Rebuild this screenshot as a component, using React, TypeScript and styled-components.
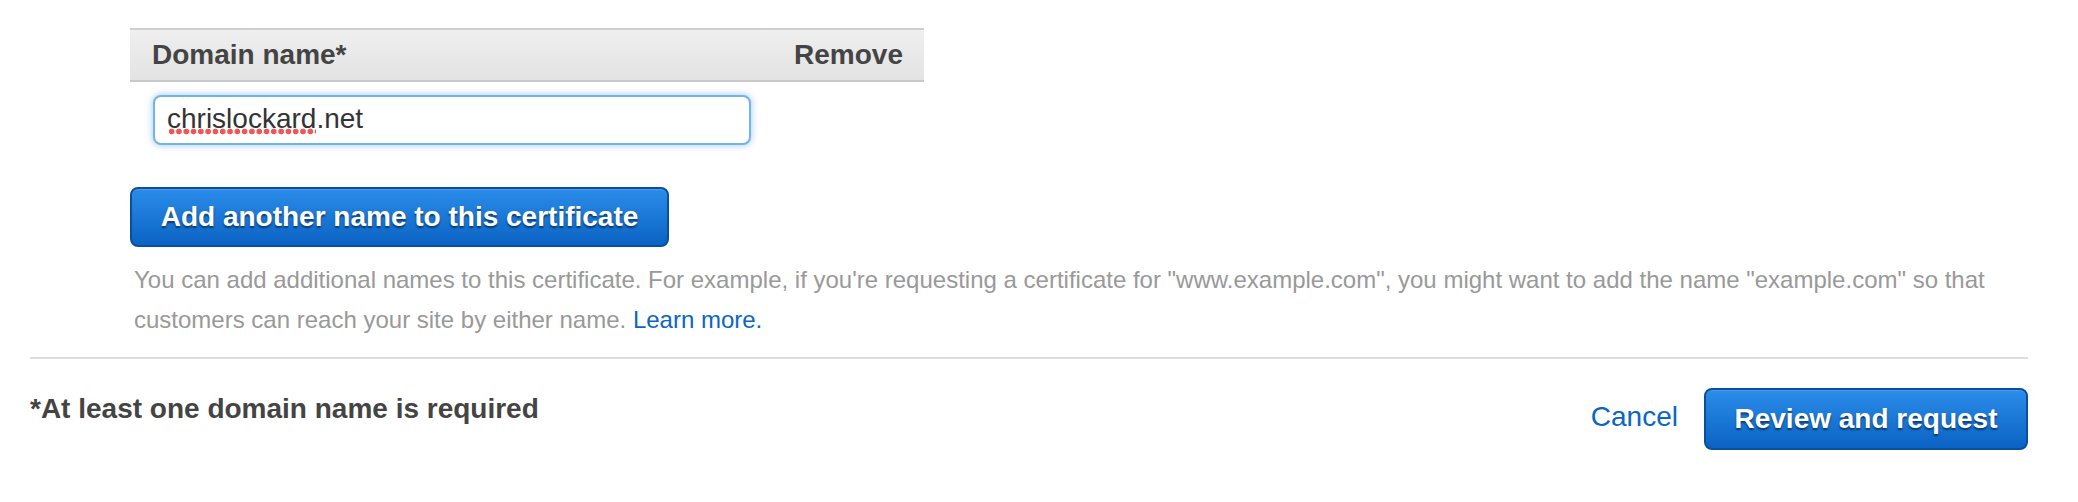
import React from "react";
import styled, { createGlobalStyle } from "styled-components";

const GlobalStyle = createGlobalStyle`
  html, body {
    margin: 0;
    padding: 0;
    background: #ffffff;
    font-family: "Liberation Sans", Arial, Helvetica, sans-serif;
    color: #444444;
  }
`;

const Page = styled.div`
  width: 2078px;
  height: 502px;
  box-sizing: border-box;
  padding: 28px 50px 0 30px;
`;

const Section = styled.section`
  padding-left: 100px;
`;

const TableHeader = styled.div`
  width: 794px;
  height: 54px;
  box-sizing: border-box;
  display: flex;
  align-items: center;
  justify-content: space-between;
  padding: 0 21px 0 22px;
  border-top: 2px solid #cfcfcf;
  border-bottom: 2px solid #c9c9c9;
  background: linear-gradient(#efefef, #e3e3e3);
`;

const HeaderCell = styled.span`
  font-size: 28px;
  font-weight: 700;
  color: #444444;
  line-height: 1;
`;

const Row = styled.div`
  padding: 13px 0 0 23px;
`;

const TextBox = styled.div`
  width: 598px;
  height: 50px;
  box-sizing: border-box;
  display: flex;
  align-items: center;
  padding: 0 12px 2px 12px;
  border: 2px solid #72b3ea;
  border-radius: 8px;
  box-shadow: 0 0 6px 1px rgba(110, 175, 235, 0.55);
  font-size: 28px;
  color: #333333;
  background: #ffffff;
`;

const Misspelled = styled.span`
  background-image: radial-gradient(circle, #ef5757 2.6px, transparent 3.2px);
  background-repeat: repeat-x;
  background-size: 7.3px 7px;
  background-position: 1px 100%;
`;

const PrimaryButton = styled.button`
  height: 60px;
  box-sizing: border-box;
  padding: 0 28px;
  border: 2px solid #0a4f9c;
  border-radius: 8px;
  background: linear-gradient(#2b8ce9, #0b63c3);
  color: #ffffff;
  font-family: "Liberation Sans", Arial, Helvetica, sans-serif;
  font-size: 28px;
  font-weight: 700;
  text-shadow: 0 2px 2px rgba(0, 0, 0, 0.5);
  cursor: pointer;
  box-shadow: inset 0 1px 0 rgba(255, 255, 255, 0.15);
`;

const AddButton = styled(PrimaryButton)`
  width: 539px;
  margin-top: 42px;
  display: block;
`;

const Help = styled.p`
  margin: 13px 0 0 4px;
  font-size: 24px;
  line-height: 40px;
  color: #999999;
`;

const Link = styled.a`
  color: #0b66c2;
  text-decoration: none;
`;

const Divider = styled.hr`
  margin: 17px 0 0 0;
  border: none;
  height: 2px;
  background: #dddddd;
`;

const Footer = styled.div`
  display: flex;
  justify-content: space-between;
  align-items: flex-start;
  padding-top: 29px;
`;

const Required = styled.span`
  margin-top: 5px;
  font-size: 28px;
  font-weight: 700;
  color: #444444;
`;

const Actions = styled.div`
  display: flex;
  align-items: center;
  gap: 26px;
`;

const Cancel = styled.a`
  font-size: 28px;
  color: #0b66c2;
  margin-bottom: 4px;
  text-decoration: none;
`;

const ReviewButton = styled(PrimaryButton)`
  width: 324px;
  height: 62px;
`;

export default function App() {
  return (
    <>
      <GlobalStyle />
      <Page>
        <Section>
          <TableHeader>
            <HeaderCell>Domain name*</HeaderCell>
            <HeaderCell>Remove</HeaderCell>
          </TableHeader>
          <Row>
            <TextBox role="textbox">
              <Misspelled>chrislockard</Misspelled>.net
            </TextBox>
          </Row>
          <AddButton>Add another name to this certificate</AddButton>
          <Help>
            You can add additional names to this certificate. For example, if
            you're requesting a certificate for "www.example.com", you might
            want to add the name "example.com" so that customers can reach your
            site by either name. <Link href="#">Learn more.</Link>
          </Help>
        </Section>
        <Divider />
        <Footer>
          <Required>*At least one domain name is required</Required>
          <Actions>
            <Cancel href="#">Cancel</Cancel>
            <ReviewButton>Review and request</ReviewButton>
          </Actions>
        </Footer>
      </Page>
    </>
  );
}
